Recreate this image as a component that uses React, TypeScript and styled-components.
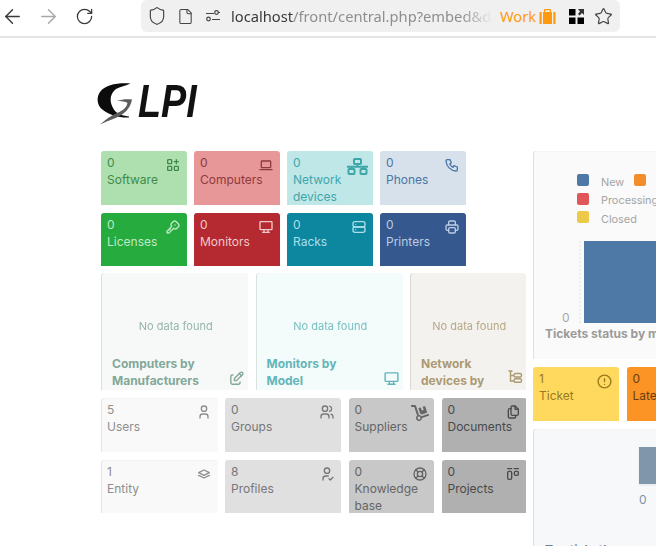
import { createGlobalStyle } from 'styled-components';
import styled from 'styled-components';
import type { ReactNode } from 'react';
import {
  TbAlertCircle,
  TbApps,
  TbDeviceDesktop,
  TbDeviceLaptop,
  TbEdit,
  TbFiles,
  TbKey,
  TbLayoutKanban,
  TbLifebuoy,
  TbPhone,
  TbPrinter,
  TbServer,
  TbStack,
  TbUser,
  TbUserCheck,
  TbUsers,
} from 'react-icons/tb';
import { FaDolly } from 'react-icons/fa';
import { LuArrowLeft, LuArrowRight, LuFile, LuRotateCw, LuShield, LuStar } from 'react-icons/lu';

const GlobalStyle = createGlobalStyle`
  html, body {
    margin: 0;
    padding: 0;
    background: #fff;
    overflow: hidden;
    height: 546px;
  }
  * {
    box-sizing: border-box;
  }
`;

const Page = styled.div`
  width: 656px;
  height: 546px;
  overflow: hidden;
  font-family: Inter, 'Liberation Sans', sans-serif;
`;

/* browser chrome */
const Toolbar = styled.div`
  height: 38px;
  display: flex;
  align-items: flex-start;
  border-bottom: 2px solid #e4e4e4;
  background: #fff;
`;

const NavButton = styled.div<{ $dim?: boolean }>`
  width: 24px;
  height: 32px;
  margin-right: 12px;
  display: flex;
  align-items: center;
  justify-content: center;
  color: ${(p) => (p.$dim ? '#a8a8a8' : '#3a3a3a')};
`;

const UrlBar = styled.div`
  margin-left: 33px;
  width: 479px;
  height: 32px;
  background: #f0f0f0;
  border-radius: 6px;
  display: flex;
  align-items: center;
  padding-left: 6px;
  font-family: 'Noto Sans', sans-serif;
  font-size: 14.7px;
  color: #3a3a3a;
`;

const BarIcon = styled.span<{ $gap: number }>`
  display: flex;
  color: #444;
  margin-right: ${(p) => p.$gap}px;
`;

const UrlText = styled.div`
  width: 262px;
  white-space: nowrap;
  overflow: hidden;
  -webkit-mask-image: linear-gradient(to right, #000 88%, transparent);
  mask-image: linear-gradient(to right, #000 88%, transparent);
`;

const UrlHost = styled.span`
  color: #3a3a3a;
`;

const UrlRest = styled.span`
  color: #8e8e8e;
`;

const Container = styled.div`
  display: flex;
  align-items: center;
  gap: 3px;
  color: #ff9a0e;
  margin-left: 7px;
  margin-right: 12.5px;
`;

/* GLPI */
const LogoRow = styled.div`
  height: 113px;
  padding: 45px 0 0 97px;
  display: flex;
  align-items: flex-start;
`;

const LogoText = styled.span`
  display: inline-block;
  margin: -9px 0 0 -1px;
  font-family: 'Liberation Sans', sans-serif;
  font-style: italic;
  font-weight: 700;
  font-size: 46px;
  line-height: 54px;
  color: #111;
  transform: scaleX(0.82);
  transform-origin: left top;
`;

const Dashboard = styled.div`
  display: flex;
  gap: 7px;
  padding-left: 101px;
`;

const LeftColumn = styled.div`
  width: 425px;
  flex: none;
  overflow: hidden;
  display: flex;
  flex-direction: column;
`;

const RightColumn = styled.div`
  width: 200px;
  flex: none;
  display: flex;
  flex-direction: column;
  gap: 8px;
`;

const TileGrid = styled.div<{ $columns: string; $colGap?: number }>`
  display: grid;
  grid-template-columns: ${(p) => p.$columns};
  grid-auto-rows: 53.6px;
  gap: 8px ${(p) => p.$colGap ?? 7.5}px;
`;

const Tile = styled.div<{ $bg: string; $fg: string; $shade?: boolean }>`
  position: relative;
  overflow: hidden;
  padding: 3px 6px 0;
  background: ${(p) => p.$bg};
  color: ${(p) => p.$fg};
  border-radius: 3px 3px 0 0;
  box-shadow: ${(p) => (p.$shade ? 'inset 1px 0 0 rgba(0, 0, 0, 0.08), inset 0 1px 0 rgba(0, 0, 0, 0.02)' : 'none')};
  font-size: 12px;
  line-height: 17px;
`;

const TileIcon = styled.span<{ $top?: number; $right?: number }>`
  position: absolute;
  top: ${(p) => p.$top ?? 6}px;
  right: ${(p) => p.$right ?? 6}px;
  display: flex;
`;

const BigGrid = styled.div`
  display: grid;
  grid-template-columns: 147px 147px 116px;
  gap: 7.5px;
  margin: 7px 0 8px;
`;

const BigCard = styled.div<{ $bg: string; $fg: string }>`
  position: relative;
  height: 117px;
  overflow: hidden;
  background: ${(p) => p.$bg};
  color: ${(p) => p.$fg};
  border-radius: 3px 3px 0 0;
  box-shadow: inset 1px 0 0 rgba(0, 0, 0, 0.1);
`;

const Empty = styled.div`
  text-align: center;
  font-size: 11px;
  line-height: 14px;
  padding: 46px 0 0 2.5px;
  opacity: 0.85;
`;

const BigTitle = styled.div`
  font-size: 12px;
  font-weight: 700;
  line-height: 17px;
  margin-top: 22px;
  margin-left: 11px;
  width: 90px;
`;

const BigIcon = styled.span`
  position: absolute;
  top: 97px;
  right: 3px;
  display: flex;
`;

const ChartCard = styled.div<{ $bg: string; $height: number }>`
  position: relative;
  height: ${(p) => p.$height}px;
  overflow: hidden;
  background: ${(p) => p.$bg};
  border-radius: 3px 3px 0 0;
  box-shadow: inset 1px 0 0 rgba(0, 0, 0, 0.1), inset 0 1px 0 rgba(0, 0, 0, 0.02);
`;

const Legend = styled.div`
  display: grid;
  grid-template-columns: 12px 21px 12px 1fr;
  grid-auto-rows: 18.5px;
  column-gap: 12px;
  align-items: center;
  padding: 20px 0 0 44px;
  font-size: 10.9px;
  color: #a4a4a4;
`;

const LegendRow = styled.div`
  display: contents;
`;

const LegendLabel = styled.span`
  padding-top: 3px;
  white-space: nowrap;
`;

const Swatch = styled.span<{ $color: string }>`
  width: 12px;
  height: 12px;
  border-radius: 2px;
  background: ${(p) => p.$color};
`;

const Plot = styled.div`
  display: flex;
  align-items: flex-end;
  height: 83px;
  margin-top: 13px;
  padding-left: 29px;
`;

const Zero = styled.span`
  font-size: 12px;
  line-height: 17px;
  width: 17px;
  color: #a8a8a8;
  margin-bottom: -3.5px;
`;

const Axis = styled.span`
  width: 5px;
  height: 82px;
  border-left: 2px dotted #ededed;
`;

const Bar = styled.div<{ $color: string; $width: number; $height: number }>`
  width: ${(p) => p.$width}px;
  height: ${(p) => p.$height}px;
  background: ${(p) => p.$color};
`;

const ChartTitle = styled.div`
  padding: 2px 0 0 12px;
  font-size: 12px;
  line-height: 17px;
  font-weight: 700;
  color: #9a9a9a;
  white-space: nowrap;
`;

const MiniPlot = styled.div`
  padding: 18px 0 0 106px;
  display: flex;
  flex-direction: column;
`;

const MiniBar = styled.div`
  width: 120px;
  height: 37px;
  background: #8096ab;
  box-shadow: -1px 0 0 #f0f2f4, 0 2px 0 #eceef1;
`;

const MiniZero = styled.span`
  font-size: 12px;
  line-height: 17px;
  margin-top: 7px;
  color: #7b93ad;
`;

const MiniTitle = styled.div`
  padding: 33px 0 0 12px;
  font-size: 12px;
  line-height: 17px;
  font-weight: 700;
  color: #6d7f92;
  white-space: nowrap;
`;

function NetworkIcon() {
  return (
    <svg width="21" height="17" viewBox="0 0 21 17" fill="none" stroke="currentColor" strokeWidth="2">
      <rect x="7" y="1" width="7" height="5" rx="0.8" />
      <rect x="1.5" y="11" width="6" height="5" rx="0.8" />
      <rect x="13.5" y="11" width="6" height="5" rx="0.8" />
      <path d="M0 8.7h21M10.500 6v2.700M4.500 8.700V11M16.500 8.700V11" />
    </svg>
  );
}

function TreeIcon() {
  return (
    <svg width="15" height="13" viewBox="0 0 15 13" fill="none" stroke="currentColor" strokeWidth="1.4">
      <path d="M0.500 1h4M2.500 1v10h3.500M2.500 5.500h3.500" />
      <rect x="6" y="3.500" width="7.500" height="3.500" rx="1.500" />
      <rect x="6" y="8.700" width="7.500" height="3.500" rx="1.500" />
    </svg>
  );
}

type TileData = {
  value: number;
  label: string;
  bg: string;
  fg: string;
  icon: ReactNode;
  shade?: boolean;
  iconTop?: number;
  iconRight?: number;
};

const assets: TileData[] = [
  { value: 0, label: 'Software', bg: '#aedfae', fg: '#3f8b4c', icon: <TbApps size={16} /> },
  { value: 0, label: 'Computers', bg: '#e79797', fg: '#8f3a40', icon: <TbDeviceLaptop size={16} /> },
  {
    value: 0,
    label: 'Network devices',
    bg: '#bfe7e8',
    fg: '#3fa6a8',
    icon: <NetworkIcon />,
    iconTop: 7,
    iconRight: 5,
  },
  { value: 0, label: 'Phones', bg: '#d6e1ec', fg: '#4a75a5', icon: <TbPhone size={16} /> },
  { value: 0, label: 'Licenses', bg: '#26ab3e', fg: '#bfe8c6', icon: <TbKey size={16} /> },
  { value: 0, label: 'Monitors', bg: '#b52a30', fg: '#efc9cb', icon: <TbDeviceDesktop size={16} /> },
  { value: 0, label: 'Racks', bg: '#0d879f', fg: '#aadfe8', icon: <TbServer size={16} /> },
  { value: 0, label: 'Printers', bg: '#35588e', fg: '#bccde4', icon: <TbPrinter size={16} /> },
];

const admin: TileData[] = [
  { value: 5, label: 'Users', bg: '#f9f9f9', fg: '#8e8e8e', icon: <TbUser size={16} />, shade: true },
  { value: 0, label: 'Groups', bg: '#e0e0e0', fg: '#777', icon: <TbUsers size={16} /> },
  {
    value: 0,
    label: 'Suppliers',
    bg: '#c8c8c8',
    fg: '#656565',
    icon: <FaDolly size={18} />,
    iconTop: 6,
    iconRight: 5,
  },
  { value: 0, label: 'Documents', bg: '#b0b0b0', fg: '#4a4a4a', icon: <TbFiles size={16} /> },
  { value: 1, label: 'Entity', bg: '#f9f9f9', fg: '#8e8e8e', icon: <TbStack size={16} />, shade: true },
  { value: 8, label: 'Profiles', bg: '#e0e0e0', fg: '#777', icon: <TbUserCheck size={16} /> },
  { value: 0, label: 'Knowledge base', bg: '#c8c8c8', fg: '#656565', icon: <TbLifebuoy size={16} /> },
  { value: 0, label: 'Projects', bg: '#b0b0b0', fg: '#4a4a4a', icon: <TbLayoutKanban size={16} /> },
];

const renderTile = (t: TileData) => (
  <Tile key={t.label} $bg={t.bg} $fg={t.fg} $shade={t.shade}>
    <div>{t.value}</div>
    <div>{t.label}</div>
    <TileIcon $top={t.iconTop} $right={t.iconRight}>
      {t.icon}
    </TileIcon>
  </Tile>
);

function SliderIcon() {
  return (
    <svg width="16" height="16" viewBox="0 0 16 16" fill="none" stroke="currentColor" strokeWidth="1.2">
      <path d="M1 5.500h8M7 11.500h8M13 4.500h2" />
      <circle cx="11.500" cy="4.500" r="1.800" />
      <circle cx="3.500" cy="11" r="1.800" />
    </svg>
  );
}

function BagIcon() {
  return (
    <svg width="17" height="15" viewBox="0 0 17 15" fill="#ff9a0e">
      <path d="M6 0h5a1 1 0 0 1 1 1v2h-1.200V1.300H6.200V3H5V1a1 1 0 0 1 1-1z" />
      <rect x="0.500" y="3" width="2.200" height="12" />
      <rect x="4" y="3" width="9" height="12" />
      <rect x="14.300" y="3" width="2.200" height="12" />
    </svg>
  );
}

function ExtensionIcon() {
  return (
    <svg width="15" height="15" viewBox="0 0 15 15" fill="#000">
      <rect x="0" y="0" width="6.500" height="6.500" />
      <rect x="0" y="8.500" width="6.500" height="6.500" />
      <rect x="8.500" y="8.500" width="6.500" height="6.500" />
      <path d="M9 0h6v6l-2-2-2.500 2.500-1.500-1.500L11 2.500z" fill="#333" />
    </svg>
  );
}

function Swoosh() {
  return (
    <svg width="42" height="43" viewBox="0 0 42 43">
      <path
        d="M33.500 0.500C22-0.500 8 1.500 3 9c-4 6-3 14 3 18 7 5 16 8 26 7.500v-1c-8-1-14-3.500-16.500-9.500-3.500-7-2-14 3.500-18 4-2.500 10-3 14.500-5.500z"
        fill="#0c0c0c"
      />
      <path
        d="M3 41.500c9-4.500 18-6.500 24-11.500 4-3 7-8 8-13.500-5-.5-11 0-15 1.500 4 0 9 .5 10.500 2-1 5-5.500 8-10.500 10-6 2.500-12 7-17 11.500z"
        fill="#5c5c5c"
      />
    </svg>
  );
}

export default function App() {
  return (
    <Page>
      <GlobalStyle />
      <Toolbar>
        <NavButton>
          <LuArrowLeft size={23} strokeWidth={1.5} />
        </NavButton>
        <NavButton $dim>
          <LuArrowRight size={23} strokeWidth={1.5} />
        </NavButton>
        <NavButton>
          <LuRotateCw size={19} strokeWidth={1.6} />
        </NavButton>
        <UrlBar>
          <BarIcon $gap={9.5}>
            <LuShield size={20} strokeWidth={1.4} />
          </BarIcon>
          <BarIcon $gap={11.5}>
            <LuFile size={17} strokeWidth={1.5} />
          </BarIcon>
          <BarIcon $gap={10}>
            <SliderIcon />
          </BarIcon>
          <UrlText>
            <UrlHost>localhost</UrlHost>
            <UrlRest>/front/central.php?embed&amp;dashboard=central</UrlRest>
          </UrlText>
          <Container>
            Work
            <BagIcon />
          </Container>
          <BarIcon $gap={10.5}>
            <ExtensionIcon />
          </BarIcon>
          <BarIcon $gap={0}>
            <LuStar size={19} strokeWidth={1.5} />
          </BarIcon>
        </UrlBar>
      </Toolbar>
      <LogoRow>
        <Swoosh />
        <LogoText>LPI</LogoText>
      </LogoRow>
      <Dashboard>
        <LeftColumn>
          <TileGrid $columns="85.5px 85.5px 85.5px 85.5px">{assets.map(renderTile)}</TileGrid>
          <BigGrid>
            <BigCard $bg="#f6f9f8" $fg="#83a898">
              <Empty>No data found</Empty>
              <BigTitle>Computers by Manufacturers</BigTitle>
              <BigIcon>
                <TbEdit size={17} />
              </BigIcon>
            </BigCard>
            <BigCard $bg="#f3fbfb" $fg="#63b5b8">
              <Empty>No data found</Empty>
              <BigTitle>Monitors by Model</BigTitle>
              <BigIcon>
                <TbDeviceDesktop size={17} />
              </BigIcon>
            </BigCard>
            <BigCard $bg="#f3f2ee" $fg="#ac9a72">
              <Empty>No data found</Empty>
              <BigTitle>Network devices by Manufacturers</BigTitle>
              <BigIcon>
                <TreeIcon />
              </BigIcon>
            </BigCard>
          </BigGrid>
          <TileGrid $columns="116.5px 116px 85.5px 85.5px">{admin.map(renderTile)}</TileGrid>
        </LeftColumn>
        <RightColumn>
          <ChartCard $bg="#fafafa" $height={208}>
            <Legend>
              <LegendRow>
                <Swatch $color="#4e79a7" />
                <LegendLabel>New</LegendLabel>
                <Swatch $color="#f28e2b" />
                <span />
              </LegendRow>
              <LegendRow>
                <Swatch $color="#e15759" />
                <LegendLabel>Processing</LegendLabel>
                <span />
                <span />
              </LegendRow>
              <LegendRow>
                <Swatch $color="#edc949" />
                <LegendLabel>Closed</LegendLabel>
              </LegendRow>
            </Legend>
            <Plot>
              <Zero>0</Zero>
              <Axis />
              <Bar $color="#4e79a7" $width={100} $height={82} />
            </Plot>
            <ChartTitle>Tickets status by month</ChartTitle>
          </ChartCard>
          <TileGrid $columns="85.5px 85.5px" $colGap={8}>
            <Tile $bg="#ffd95e" $fg="#997a1e">
              <div>1</div>
              <div>Ticket</div>
              <TileIcon>
                <TbAlertCircle size={17} />
              </TileIcon>
            </Tile>
            <Tile $bg="#fb9325" $fg="#6a3e10">
              <div>0</div>
              <div>Late tickets</div>
            </Tile>
          </TileGrid>
          <ChartCard $bg="#f6f8fa" $height={130}>
            <MiniPlot>
              <MiniBar />
              <MiniZero>0</MiniZero>
            </MiniPlot>
            <MiniTitle>Top ticket's requesters</MiniTitle>
          </ChartCard>
        </RightColumn>
      </Dashboard>
    </Page>
  );
}
